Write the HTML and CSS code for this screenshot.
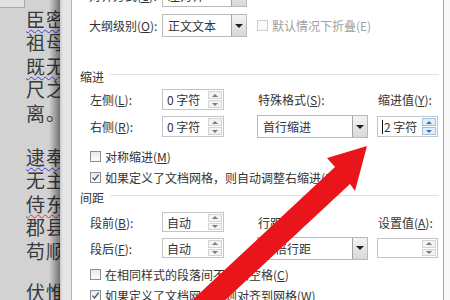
FILE: index.html
```html
<!DOCTYPE html>
<html lang="zh-CN">
<head>
  <meta charset="UTF-8">
  <title>段落</title>
  <link rel="stylesheet" href="styles.css">
</head>
<body>
  <div class="screen">
    <!-- 文档正文（被对话框挡住） -->
    <div class="doc">
      <div class="ruler"></div>
      <div class="para">
        <div class="line"><span class="grammar">臣密</span>言：臣以险衅</div>
        <div class="line">祖母刘悯臣孤弱</div>
        <div class="line"><span class="grammar">既无</span>伯叔，终鲜兄弟</div>
        <div class="line">尺之僮，茕茕孑立</div>
        <div class="line">离。</div>
      </div>
      <div class="para second">
        <div class="line"><span class="grammar">逮奉</span>圣朝，沐浴清化</div>
        <div class="line">无主，辞不赴命</div>
        <div class="line"><span class="spell">侍东</span>宫，非臣陨首</div>
        <div class="line">郡县逼迫，催臣上道</div>
        <div class="line">苟顺私情，则告诉不许</div>
      </div>
      <div class="para third">
        <div class="line">伏惟圣朝以孝治天下</div>
      </div>
    </div>

    <!-- 段落对话框 -->
    <div class="dialog">
      <div class="panel">
        <div class="form">
          <div class="row">
            <span class="label">对齐方式(<u>G</u>):</span>
            <div class="select short"><span class="value">左对齐</span><span class="drop"></span></div>
          </div>
          <div class="row">
            <span class="label">大纲级别(<u>O</u>):</span>
            <div class="select short"><span class="value">正文文本</span><span class="drop"></span></div>
            <label class="check disabled inline"><span class="box"></span>默认情况下折叠(E)</label>
          </div>

          <div class="section first">缩进</div>
          <div class="fields indent">
            <span class="label">左侧(<u>L</u>):</span>
            <div class="spin"><span class="value">0 字符</span><span class="arrows"><i class="up"></i><i class="down"></i></span></div>
            <span class="label">特殊格式(<u>S</u>):</span>
            <span class="label">缩进值(<u>Y</u>):</span>

            <span class="label">右侧(<u>R</u>):</span>
            <div class="spin"><span class="value">0 字符</span><span class="arrows"><i class="up"></i><i class="down"></i></span></div>
            <div class="select long"><span class="value">首行缩进</span><span class="drop"></span></div>
            <div class="spin small active"><span class="value"><span class="caret"></span>2 字符</span><span class="arrows"><i class="up"></i><i class="down"></i></span></div>
          </div>
          <label class="check sym"><span class="box"></span>对称缩进(<u>M</u>)</label>
          <label class="check near"><span class="box checked"><svg viewBox="0 0 9 9"><path d="M1.5 4.6 L3.6 7 L7.6 1.6" fill="none" stroke="#3b5f8f" stroke-width="1.4"/></svg></span>如果定义了文档网格，则自动调整右缩进(<u>D</u>)</label>

          <div class="section">间距</div>
          <div class="fields spacing">
            <span class="label">段前(<u>B</u>):</span>
            <div class="spin"><span class="value">自动</span><span class="arrows"><i class="up"></i><i class="down"></i></span></div>
            <span class="label">行距(<u>N</u>):</span>
            <span class="label">设置值(<u>A</u>):</span>

            <span class="label">段后(<u>F</u>):</span>
            <div class="spin"><span class="value">自动</span><span class="arrows"><i class="up"></i><i class="down"></i></span></div>
            <div class="select long"><span class="value">单倍行距</span><span class="drop"></span></div>
            <div class="spin small"><span class="value"></span><span class="arrows"><i class="up"></i><i class="down"></i></span></div>
          </div>
          <label class="check gap"><span class="box"></span>在相同样式的段落间不添加空格(<u>C</u>)</label>
          <label class="check near"><span class="box checked"><svg viewBox="0 0 9 9"><path d="M1.5 4.6 L3.6 7 L7.6 1.6" fill="none" stroke="#3b5f8f" stroke-width="1.4"/></svg></span>如果定义了文档网格，则对齐到网格(<u>W</u>)</label>
        </div>
      </div>
    </div>
    <div class="desk"></div>

    <!-- 红色箭头标注 -->
    <svg class="arrow" viewBox="0 0 450 300" width="450" height="300">
      <polygon points="367,146 355,191 350,184 220,305 187,305 335,167 327,158" fill="#e9151b"/>
    </svg>
  </div>
</body>
</html>
```

FILE: styles.css
```css
/* 段落对话框截图 */
* {
  box-sizing: border-box;
}
body {
  margin: 0;
  width: 450px;
  height: 300px;
  overflow: hidden;
  font-family: "Noto Sans CJK SC", "Liberation Sans", sans-serif;
}
u {
  text-underline-offset: 1px;
}
.screen {
  position: relative;
  display: flex;
  height: 300px;
  overflow: hidden;
  background: #f7f7f7;
}

/* 左边的文档 */
.doc {
  position: relative;
  flex: none;
  width: 60px;
  padding: 7px 0 0 26px;
  background: #d2d2d2;
  color: #3a3a3a;
  font-size: 19px;
  line-height: 23.4px;
  letter-spacing: 1px;
  overflow: hidden;
}
.doc::after {
  content: "";
  position: absolute;
  top: 0;
  right: 0;
  bottom: 0;
  width: 11px;
  background: linear-gradient(to right, rgba(0, 0, 0, 0), rgba(0, 0, 0, .45));
}
.ruler {
  position: absolute;
  top: 0;
  left: 0;
  width: 25px;
  height: 8px;
  background: #e0e0e0;
  border-right: 1px solid #a9a9a9;
  border-bottom: 1px solid #a9a9a9;
}
.line {
  white-space: nowrap;
}
.para.second {
  margin-top: 21px;
}
.para.third {
  margin-top: 18px;
}
.grammar {
  text-decoration: underline wavy #3c3cd8;
  text-decoration-thickness: 1px;
  text-underline-offset: 2px;
}
.spell {
  text-decoration: underline wavy #d83030;
  text-decoration-thickness: 1px;
  text-underline-offset: 2px;
}

/* 对话框 */
.dialog {
  flex: none;
  width: 384px;
  padding-left: 11px;
  background: linear-gradient(to right, #c9c9c9, #e6e6e6 3px);
  border-right: 1px solid #a3a3a3;
}
.panel {
  height: 100%;
  padding: 0 4px 0 17px;
  background: #fff;
  border-left: 1px solid #b4b4b4;
  overflow: hidden;
  color: #333;
  font-size: 12px;
}
.form {
  margin-top: -16px;
}
.desk {
  flex: 1;
  background: #f8f8f8;
}
.row {
  display: flex;
  align-items: center;
  height: 23px;
}
.row + .row {
  margin-top: 7px;
}
.label {
  flex: none;
  width: 73px;
  white-space: nowrap;
}

/* 下拉框 */
.select {
  display: flex;
  align-items: center;
  height: 23px;
  border: 1px solid #b9b9b9;
  background: #fff;
}
.select.short {
  width: 85px;
}
.select.long {
  width: 111px;
  height: 23px;
}
.select .value {
  flex: 1;
  padding-left: 5px;
  white-space: nowrap;
}
.drop {
  display: flex;
  align-items: center;
  justify-content: center;
  width: 15px;
  height: 100%;
  border-left: 1px solid #a3a3a3;
  background: linear-gradient(#f3f3f3, #d8d8d8);
}
.drop::before {
  content: "";
  border-left: 4px solid transparent;
  border-right: 4px solid transparent;
  border-top: 4px solid #1e1e1e;
}

/* 微调框 */
.spin {
  display: flex;
  align-items: center;
  width: 62px;
  height: 21px;
  border: 1px solid #c4c4c4;
  background: #fff;
}
.spacing .spin {
  height: 20px;
}
.spin.small {
  width: 61px;
}
.spin .value {
  display: flex;
  align-items: center;
  flex: 1;
  padding-left: 4px;
  white-space: nowrap;
}
.caret {
  width: 1px;
  height: 14px;
  margin-right: 1px;
  background: #111;
}
.arrows {
  display: flex;
  flex-direction: column;
  gap: 1px;
  width: 15px;
  height: 100%;
  padding: 1px 1px 1px 0;
}
.arrows i {
  display: flex;
  align-items: center;
  justify-content: center;
  flex: 1;
  border: 1px solid #d4d4d4;
  background: #f3f3f3;
}
.arrows .up::before {
  content: "";
  border-left: 3px solid transparent;
  border-right: 3px solid transparent;
  border-bottom: 3px solid #7a7a7a;
}
.arrows .down::before {
  content: "";
  border-left: 3px solid transparent;
  border-right: 3px solid transparent;
  border-top: 3px solid #7a7a7a;
}
.spin.active .arrows i {
  border-color: #9fc0e3;
  background: #e4eefa;
}
.spin.active .arrows .up::before {
  border-bottom-color: #3c72b4;
}
.spin.active .arrows .down::before {
  border-top-color: #3c72b4;
}

/* 分组标题 */
.section {
  display: flex;
  align-items: center;
  height: 16px;
  margin: 3px 0 0 -9px;
}
.section.first {
  margin-top: 31px;
}
.section::after {
  content: "";
  flex: 1;
  margin: -3px 0 0 6px;
  border-top: 1px solid #e2e2e2;
}

/* 网格字段 */
.fields {
  display: grid;
  grid-template-columns: 73px 95px 120px 61px;
  align-items: center;
  row-gap: 6px;
}
.fields .label {
  padding-left: 1px;
}
.indent {
  grid-template-rows: 21px 21px;
  margin-top: 5px;
}
.spacing {
  grid-template-rows: 20px 20px;
  margin-top: 7px;
}

/* 复选框 */
.check {
  display: flex;
  align-items: center;
  height: 17px;
  white-space: nowrap;
}
.check.inline {
  margin-left: 10px;
}
.check.sym {
  margin-top: 11px;
}
.check.near {
  margin-top: 4px;
}
.check.gap {
  margin-top: 8px;
}
.box {
  display: flex;
  align-items: center;
  justify-content: center;
  flex: none;
  width: 11px;
  height: 11px;
  margin: 0 4px 0 1px;
  border: 1px solid #8e8e8e;
  background: linear-gradient(#e9e9e9, #fdfdfd);
}
.box svg {
  width: 9px;
  height: 9px;
}
.check.disabled {
  color: #a0a0a0;
}
.check.disabled .box {
  margin-left: 0;
  border-color: #cdcdcd;
  background: #fafafa;
}

/* 标注箭头 */
.arrow {
  position: absolute;
  top: 0;
  left: 0;
}
```
